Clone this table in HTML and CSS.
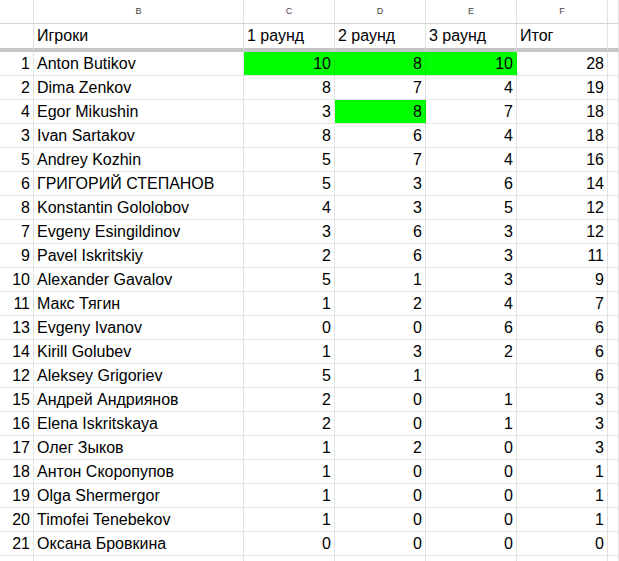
FILE: index.html
```html
<!DOCTYPE html>
<html lang="ru">
<head>
<meta charset="utf-8">
<title>Итоги</title>
<link rel="stylesheet" href="styles.css">
</head>
<body>
<div class="sheet" id="sheet">
  <div class="hd"></div><div class="hd">B</div><div class="hd">C</div><div class="hd">D</div><div class="hd">E</div><div class="hd">F</div><div class="hd"></div>
  <div class="c fr"></div><div class="c fr">Игроки</div><div class="c fr">1 раунд</div><div class="c fr">2 раунд</div><div class="c fr">3 раунд</div><div class="c fr">Итог</div><div class="c fr"></div>
</div>
<script src="script.js"></script>
</body>
</html>
```
FILE: script.js
```js
const rows = [
  [1,"Anton Butikov",10,8,10,28,"CDE"],
  [2,"Dima Zenkov",8,7,4,19,""],
  [4,"Egor Mikushin",3,8,7,18,"D"],
  [3,"Ivan Sartakov",8,6,4,18,""],
  [5,"Andrey Kozhin",5,7,4,16,""],
  [6,"ГРИГОРИЙ СТЕПАНОВ",5,3,6,14,""],
  [8,"Konstantin Gololobov",4,3,5,12,""],
  [7,"Evgeny Esingildinov",3,6,3,12,""],
  [9,"Pavel Iskritskiy",2,6,3,11,""],
  [10,"Alexander Gavalov",5,1,3,9,""],
  [11,"Макс Тягин",1,2,4,7,""],
  [13,"Evgeny Ivanov",0,0,6,6,""],
  [14,"Kirill Golubev",1,3,2,6,""],
  [12,"Aleksey Grigoriev",5,1,"",6,""],
  [15,"Андрей Андриянов",2,0,1,3,""],
  [16,"Elena Iskritskaya",2,0,1,3,""],
  [17,"Олег Зыков",1,2,0,3,""],
  [18,"Антон Скоропупов",1,0,0,1,""],
  [19,"Olga Shermergor",1,0,0,1,""],
  [20,"Timofei Tenebekov",1,0,0,1,""],
  [21,"Оксана Бровкина",0,0,0,0,""],
  ["","","","","","",""]
];
const sheet = document.getElementById("sheet");
const letters = ["A","B","C","D","E","F","G"];
rows.forEach(r => {
  for (let i = 0; i < 7; i++) {
    const d = document.createElement("div");
    d.className = "c" + (i === 1 || i === 6 ? "" : " num");
    if (i >= 2 && i <= 4 && r[6].includes(letters[i])) d.className += " g";
    d.textContent = i < 6 ? r[i] : "";
    sheet.appendChild(d);
  }
});
```
FILE: styles.css
```css
html, body {
  margin: 0;
  padding: 0;
  background: #fff;
}
body {
  width: 619px;
  height: 561px;
  overflow: hidden;
}
.sheet {
  display: grid;
  grid-template-columns: 34px 210px 91px 91px 91px 91px 1fr;
  font-family: "Liberation Sans", Arial, sans-serif;
  color: #000;
}
.hd {
  box-sizing: border-box;
  height: 24px;
  line-height: 23px;
  border-right: 1px solid #e1e1e1;
  border-bottom: 1px solid #d6d6d6;
  font-size: 9px;
  color: #444;
  text-align: center;
}
.c {
  box-sizing: border-box;
  height: 24px;
  line-height: 23px;
  padding: 0 3px;
  border-right: 1px solid #e2e3e3;
  border-bottom: 1px solid #e2e3e3;
  font-size: 16px;
  white-space: nowrap;
  overflow: hidden;
}
.c.fr {
  height: 28px;
  line-height: 24px;
  border-bottom: 4px solid #c6c6c6;
}
.num {
  text-align: right;
}
.g {
  background: #00ff00;
  border-right-color: #00ee00;
}
```
